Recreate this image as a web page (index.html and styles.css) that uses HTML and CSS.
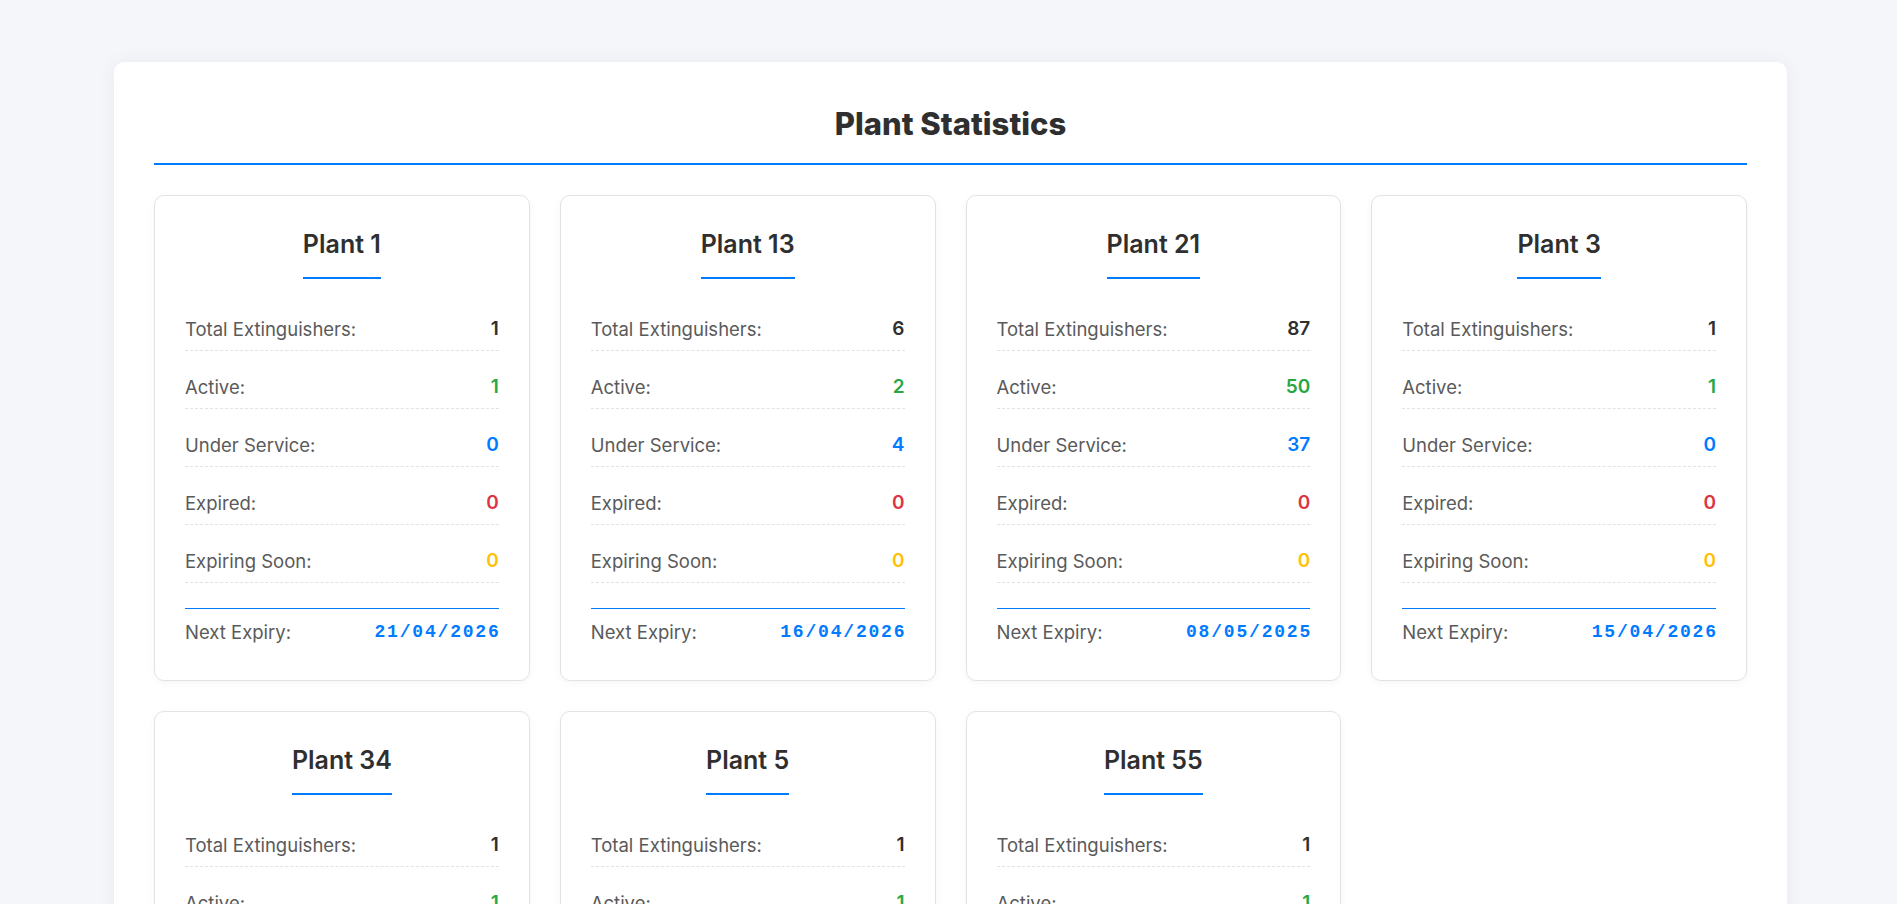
FILE: index.html
```html
<!DOCTYPE html>
<html lang="en">
<head>
<meta charset="utf-8">
<title>Plant Statistics</title>
<link rel="stylesheet" href="styles.css">
</head>
<body>
<main class="panel">
  <h1 class="panel-title">Plant Statistics</h1>
  <section class="grid">
    <article class="card">
      <h3 class="card-title">Plant 1</h3>
      <div class="rows">
        <div class="row"><span class="label">Total Extinguishers:</span><span class="value total">1</span></div>
        <div class="row"><span class="label">Active:</span><span class="value active">1</span></div>
        <div class="row"><span class="label">Under Service:</span><span class="value service">0</span></div>
        <div class="row"><span class="label">Expired:</span><span class="value expired">0</span></div>
        <div class="row"><span class="label">Expiring Soon:</span><span class="value soon">0</span></div>
      </div>
      <div class="footer"><span class="label">Next Expiry:</span><span class="date">21/04/2026</span></div>
    </article>
    <article class="card">
      <h3 class="card-title">Plant 13</h3>
      <div class="rows">
        <div class="row"><span class="label">Total Extinguishers:</span><span class="value total">6</span></div>
        <div class="row"><span class="label">Active:</span><span class="value active">2</span></div>
        <div class="row"><span class="label">Under Service:</span><span class="value service">4</span></div>
        <div class="row"><span class="label">Expired:</span><span class="value expired">0</span></div>
        <div class="row"><span class="label">Expiring Soon:</span><span class="value soon">0</span></div>
      </div>
      <div class="footer"><span class="label">Next Expiry:</span><span class="date">16/04/2026</span></div>
    </article>
    <article class="card">
      <h3 class="card-title">Plant 21</h3>
      <div class="rows">
        <div class="row"><span class="label">Total Extinguishers:</span><span class="value total">87</span></div>
        <div class="row"><span class="label">Active:</span><span class="value active">50</span></div>
        <div class="row"><span class="label">Under Service:</span><span class="value service">37</span></div>
        <div class="row"><span class="label">Expired:</span><span class="value expired">0</span></div>
        <div class="row"><span class="label">Expiring Soon:</span><span class="value soon">0</span></div>
      </div>
      <div class="footer"><span class="label">Next Expiry:</span><span class="date">08/05/2025</span></div>
    </article>
    <article class="card">
      <h3 class="card-title">Plant 3</h3>
      <div class="rows">
        <div class="row"><span class="label">Total Extinguishers:</span><span class="value total">1</span></div>
        <div class="row"><span class="label">Active:</span><span class="value active">1</span></div>
        <div class="row"><span class="label">Under Service:</span><span class="value service">0</span></div>
        <div class="row"><span class="label">Expired:</span><span class="value expired">0</span></div>
        <div class="row"><span class="label">Expiring Soon:</span><span class="value soon">0</span></div>
      </div>
      <div class="footer"><span class="label">Next Expiry:</span><span class="date">15/04/2026</span></div>
    </article>
    <article class="card">
      <h3 class="card-title">Plant 34</h3>
      <div class="rows">
        <div class="row"><span class="label">Total Extinguishers:</span><span class="value total">1</span></div>
        <div class="row"><span class="label">Active:</span><span class="value active">1</span></div>
        <div class="row"><span class="label">Under Service:</span><span class="value service">0</span></div>
        <div class="row"><span class="label">Expired:</span><span class="value expired">0</span></div>
        <div class="row"><span class="label">Expiring Soon:</span><span class="value soon">0</span></div>
      </div>
      <div class="footer"><span class="label">Next Expiry:</span><span class="date">20/04/2026</span></div>
    </article>
    <article class="card">
      <h3 class="card-title">Plant 5</h3>
      <div class="rows">
        <div class="row"><span class="label">Total Extinguishers:</span><span class="value total">1</span></div>
        <div class="row"><span class="label">Active:</span><span class="value active">1</span></div>
        <div class="row"><span class="label">Under Service:</span><span class="value service">0</span></div>
        <div class="row"><span class="label">Expired:</span><span class="value expired">0</span></div>
        <div class="row"><span class="label">Expiring Soon:</span><span class="value soon">0</span></div>
      </div>
      <div class="footer"><span class="label">Next Expiry:</span><span class="date">18/04/2026</span></div>
    </article>
    <article class="card">
      <h3 class="card-title">Plant 55</h3>
      <div class="rows">
        <div class="row"><span class="label">Total Extinguishers:</span><span class="value total">1</span></div>
        <div class="row"><span class="label">Active:</span><span class="value active">1</span></div>
        <div class="row"><span class="label">Under Service:</span><span class="value service">0</span></div>
        <div class="row"><span class="label">Expired:</span><span class="value expired">0</span></div>
        <div class="row"><span class="label">Expiring Soon:</span><span class="value soon">0</span></div>
      </div>
      <div class="footer"><span class="label">Next Expiry:</span><span class="date">22/04/2026</span></div>
    </article>
  </section>
</main>
</body>
</html>
```

FILE: styles.css
```css
html {
  scrollbar-width: none;
}
html::-webkit-scrollbar,
body::-webkit-scrollbar {
  display: none;
}
body {
  margin: 0;
  background: #f4f6fa;
  font-family: Inter, "Noto Sans", "Liberation Sans", sans-serif;
  color: #333;
}
.panel {
  width: 1673px;
  box-sizing: border-box;
  margin: 62px 110px 40px auto;
  padding: 40px;
  background: #fff;
  border-radius: 10px;
  box-shadow: 0 0 20px rgba(0, 0, 0, 0.05);
}
.panel-title {
  margin: 4px 0 30px;
  padding-bottom: 21px;
  border-bottom: 2px solid #007bff;
  text-align: center;
  font-size: 31px;
  line-height: 36px;
  font-weight: 800;
  color: #2f2f2f;
}
.grid {
  display: grid;
  grid-template-columns: repeat(4, 1fr);
  gap: 30px;
}
.card {
  border: 1px solid #e2e2e6;
  border-radius: 10px;
  padding: 34px 30px 29px;
  box-shadow: 0 2px 8px rgba(0, 0, 0, 0.04);
  display: flex;
  flex-direction: column;
  align-items: stretch;
}
.card-title {
  align-self: center;
  margin: 0 0 29px;
  padding-bottom: 18px;
  border-bottom: 2px solid #007bff;
  font-size: 25px;
  line-height: 28.8px;
  font-weight: 600;
  color: #2f2f2f;
}
.rows {
  display: flex;
  flex-direction: column;
}
.row {
  display: flex;
  justify-content: space-between;
  align-items: center;
  padding: 8px 0;
  margin-bottom: 15px;
  line-height: 26px;
  border-bottom: 1px dashed #e2e2e2;
}
.label {
  font-size: 18.5px;
  color: #5a5a5a;
}
.value {
  font-size: 19px;
  font-weight: 600;
}
.total { color: #2f2f2f; }
.active { color: #28a745; }
.service { color: #007bff; }
.expired { color: #dc3545; }
.soon { color: #ffc107; }
.footer {
  display: flex;
  justify-content: space-between;
  align-items: center;
  margin-top: 10px;
  padding: 10px 0 6px;
  line-height: 26px;
  border-top: 1px solid #007bff;
}
.date {
  font-family: "Liberation Mono", "Courier New", monospace;
  font-size: 18px;
  font-weight: 700;
  letter-spacing: 1.8px;
  margin-right: -1.8px;
  color: #007bff;
}
```
